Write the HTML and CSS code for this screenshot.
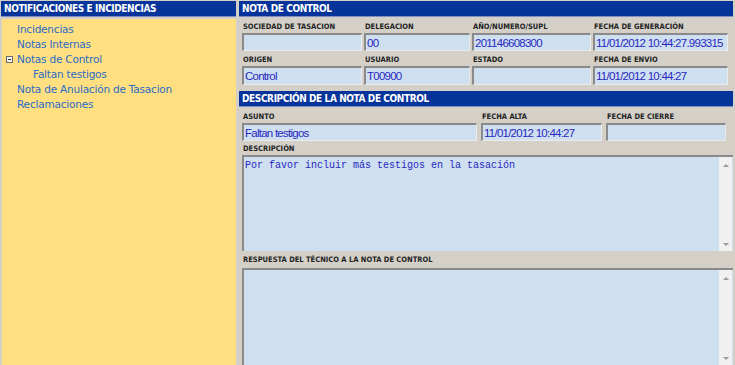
FILE: index.html
```html
<!DOCTYPE html>
<html lang="es">
<head>
<meta charset="utf-8">
<title>Nota de control</title>
<link rel="stylesheet" href="styles.css">
</head>
<body>
<div class="page">
  <aside class="sidebar">
    <div class="bar">NOTIFICACIONES E INCIDENCIAS</div>
    <ul class="tree">
      <li class="item">Incidencias</li>
      <li class="item">Notas Internas</li>
      <li class="item open"><span class="toggle"></span>Notas de Control</li>
      <li class="item sub">Faltan testigos</li>
      <li class="item">Nota de Anulación de Tasacion</li>
      <li class="item">Reclamaciones</li>
    </ul>
  </aside>
  <main class="content">
    <div class="bar">NOTA DE CONTROL</div>
    <div class="grid grid-a">
      <div class="field"><div class="label">SOCIEDAD DE TASACION</div><div class="input"></div></div>
      <div class="field"><div class="label">DELEGACION</div><div class="input">00</div></div>
      <div class="field"><div class="label">AÑO/NUMERO/SUPL</div><div class="input">201146608300</div></div>
      <div class="field"><div class="label">FECHA DE GENERACIÓN</div><div class="input">11/01/2012 10:44:27.993315</div></div>
      <div class="field"><div class="label">ORIGEN</div><div class="input">Control</div></div>
      <div class="field"><div class="label">USUARIO</div><div class="input">T00900</div></div>
      <div class="field"><div class="label">ESTADO</div><div class="input"></div></div>
      <div class="field"><div class="label">FECHA DE ENVIO</div><div class="input">11/01/2012 10:44:27</div></div>
    </div>
    <div class="bar bar-2">DESCRIPCIÓN DE LA NOTA DE CONTROL</div>
    <div class="grid grid-b">
      <div class="field"><div class="label">ASUNTO</div><div class="input">Faltan testigos</div></div>
      <div class="field"><div class="label">FECHA ALTA</div><div class="input">11/01/2012 10:44:27</div></div>
      <div class="field"><div class="label">FECHA DE CIERRE</div><div class="input"></div></div>
    </div>
    <div class="label label-desc">DESCRIPCIÓN</div>
    <div class="area area-desc">
      <div class="area-text">Por favor incluir más testigos en la tasación</div>
      <div class="scroll"><span class="arrow up"></span><span class="arrow down"></span></div>
    </div>
    <div class="label label-resp">RESPUESTA DEL TÉCNICO A LA NOTA DE CONTROL</div>
    <div class="area area-resp">
      <div class="area-text"></div>
      <div class="scroll"><span class="arrow up"></span><span class="arrow down"></span></div>
    </div>
  </main>
</div>
</body>
</html>
```
FILE: styles.css
```css
html, body {
  margin: 0;
  padding: 0;
  background: #d4d0c8;
  height: 100%;
  overflow: hidden;
}
.page {
  display: flex;
  gap: 3px;
  height: 365px;
  padding: 1px 2px 0 1px;
  box-sizing: border-box;
}
.sidebar {
  width: 235px;
  flex: none;
  display: flex;
  flex-direction: column;
}
.bar {
  background: #06349a;
  color: #fff;
  font-family: "DejaVu Sans Condensed", "DejaVu Sans", sans-serif;
  font-weight: bold;
  font-size: 10px;
  letter-spacing: -0.4px;
  height: 15px;
  line-height: 15px;
  padding-left: 3px;
  border-bottom: 1px solid #7d8fc0;
  white-space: nowrap;
}
.tree {
  list-style: none;
  margin: 2px 0 0 1px;
  padding: 3px 0 0 0;
  background: #ffdf80;
  flex: 1;
}
.item {
  font-family: "DejaVu Sans", sans-serif;
  font-size: 10.5px;
  letter-spacing: -0.2px;
  color: #2a6cc8;
  height: 15px;
  line-height: 15px;
  padding-left: 15px;
  position: relative;
}
.item.sub { padding-left: 31px; }
.toggle {
  position: absolute;
  left: 4px;
  top: 4px;
  width: 5px;
  height: 5px;
  border: 1px solid #6a6a6a;
  background: #f4f4f4;
}
.toggle::after {
  content: "";
  position: absolute;
  left: 1px;
  top: 2px;
  width: 3px;
  height: 1px;
  background: #333;
}
.content {
  flex: 1;
  display: flex;
  flex-direction: column;
  min-width: 0;
}
.grid {
  display: grid;
  padding-left: 3px;
}
.grid-a {
  grid-template-columns: 120px 106px 119px 135px;
  column-gap: 2px;
  padding-top: 3px;
}
.grid-b {
  grid-template-columns: 235px 121px 120px;
  column-gap: 4px;
  padding-top: 3px;
}
.label {
  font-family: "DejaVu Sans Condensed", "DejaVu Sans", sans-serif;
  font-weight: bold;
  font-size: 7.5px;
  color: #222;
  height: 13px;
  line-height: 13px;
  padding-left: 1px;
  white-space: nowrap;
}
.input {
  height: 18px;
  box-sizing: border-box;
  background: #cedff0;
  border-top: 2px solid #8a8a8a;
  border-left: 2px solid #8a8a8a;
  border-right: 1px solid #ececec;
  border-bottom: 1px solid #ececec;
  font-family: "Liberation Sans", Arial, sans-serif;
  font-size: 11.5px;
  letter-spacing: -0.75px;
  color: #2828c0;
  line-height: 16px;
  padding-left: 1px;
  white-space: nowrap;
  overflow: hidden;
  margin-bottom: 1px;
}
.grid-a .field:nth-child(n+5) .label { margin-top: 1px; }
.grid-a .field:nth-child(n+5) .input { height: 19px; }
.bar-2 { margin-top: 5px; }
.label-desc {
  margin-top: 0;
  padding-left: 4px;
}
.area {
  display: flex;
  margin-left: 3px;
  background: #cedff0;
  border-top: 2px solid #8a8a8a;
  border-left: 2px solid #8a8a8a;
  box-sizing: border-box;
}
.area-desc { height: 96px; }
.area-resp { flex: 1; }
.area-text {
  flex: 1;
  font-family: "Liberation Mono", "Courier New", monospace;
  font-size: 10px;
  color: #2828c0;
  padding: 3px 0 0 1px;
}
.scroll {
  width: 13px;
  background: #f0f0f0;
  display: flex;
  flex-direction: column;
  justify-content: space-between;
  align-items: center;
  padding: 7px 0 5px;
  margin-right: 1px;
}
.arrow {
  width: 0;
  height: 0;
  border-left: 3px solid transparent;
  border-right: 3px solid transparent;
}
.arrow.up { border-bottom: 3px solid #9a9a9a; }
.arrow.down { border-top: 3px solid #9a9a9a; }
.label-resp {
  height: 16px;
  line-height: 16px;
  padding-left: 4px;
  margin-top: 1px;
}
```
